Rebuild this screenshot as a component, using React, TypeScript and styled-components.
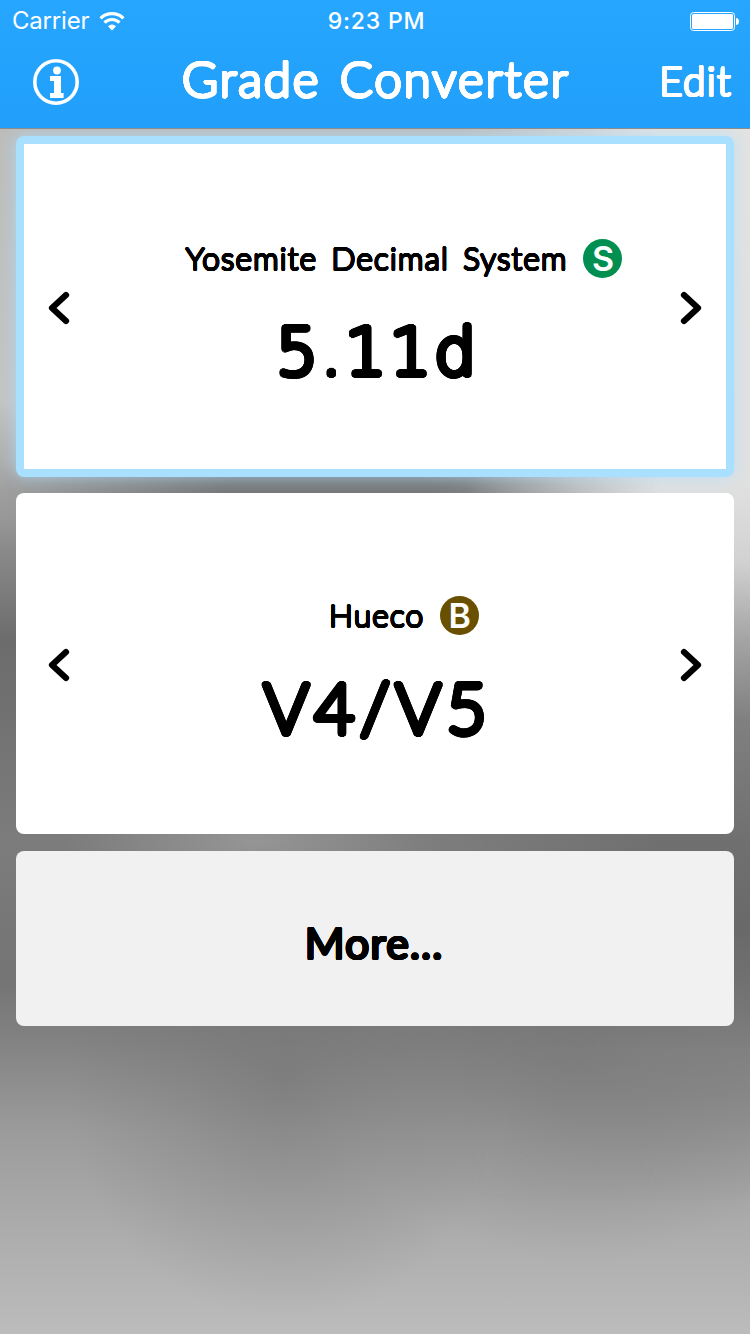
import React from "react";
import styled, { createGlobalStyle } from "styled-components";

const GlobalStyle = createGlobalStyle`
  * { box-sizing: border-box; }
  body { margin: 0; }
`;

/* Thickens a light face evenly in every direction, which rounds its stroke ends like chalk. */
const chalk = (radius: number) =>
  Array.from({ length: 20 }, (_, i) => {
    const a = (i / 20) * Math.PI * 2;
    return `${(Math.cos(a) * radius).toFixed(2)}px ${(Math.sin(a) * radius).toFixed(2)}px 0 currentColor`;
  }).join(", ");

const Screen = styled.div`
  position: relative;
  isolation: isolate;
  width: 750px;
  height: 1334px;
  overflow: hidden;
  color: #000;
  font-family: "Chalkboard SE", Lato, sans-serif;
  background:
    radial-gradient(ellipse 220px 240px at 285px 1080px, rgba(112, 112, 112, 0.5), rgba(112, 112, 112, 0.22) 50%, transparent),
    radial-gradient(ellipse 260px 210px at 580px 1050px, rgba(112, 112, 112, 0.5), rgba(112, 112, 112, 0.22) 50%, transparent),
    radial-gradient(ellipse 190px 80px at 255px 842px, rgba(160, 160, 160, 0.7), transparent),
    radial-gradient(ellipse 350px 70px at 330px 490px, rgba(118, 118, 118, 0.95) 30%, transparent),
    linear-gradient(to bottom, #bdbdbb 128px, #c4c4c4 400px, #a6a6a6 485px, #8a8a8a 550px,
      #6c6c6c 640px, #707070 700px, #7c7c7c 840px, #747474 980px, #828282 1040px, #9b9b9b 1130px,
      #acacac 1230px, #bcbcbc 1334px);

  &::before {
    content: "";
    position: absolute;
    inset: 0;
    z-index: -1;
    background:
      linear-gradient(to bottom, #e3e3e1 128px, #e1e1e1 480px, #d2d2d2 560px, #a4a4a4 640px,
        #808080 720px, #707070 840px, #696969 930px, rgba(128, 128, 128, 0.6) 1050px, transparent 1200px);
    mask-image: linear-gradient(to right, transparent 62%, #000 88%);
  }
`;

const Header = styled.header`
  position: relative;
  z-index: 1;
  height: 128px;
  color: #fff;
  background: linear-gradient(#26a6ff, #219ffa);
  box-shadow: 0 1px 0 #8c8c8c;
`;

const StatusBar = styled.div`
  height: 40px;
  padding: 1px 11px 0 12px;
  display: grid;
  grid-template-columns: 1fr auto 1fr;
  align-items: center;
  font: 400 24px/40px Inter, sans-serif;
`;

const Carrier = styled.div`
  display: flex;
  align-items: center;
  gap: 10px;
  letter-spacing: -0.2px;
`;

const Clock = styled.div`
  padding-left: 2px;
  font-weight: 500;
  font-size: 23px;
  letter-spacing: 0.8px;
`;

const BatterySlot = styled.div`
  display: flex;
  justify-content: flex-end;
`;

const NavBar = styled.nav`
  height: 88px;
  padding: 0 18px 4px 33px;
  display: grid;
  grid-template-columns: 149px 1fr 73px;
  align-items: center;
`;

const IconButton = styled.button`
  display: block;
  justify-self: start;
  padding: 0;
  border: 0;
  background: none;
`;

const Title = styled.h1`
  margin: 0;
  padding-bottom: 8px;
  font-size: 49px;
  line-height: 60px;
  font-weight: 300;
  letter-spacing: 1.9px;
  word-spacing: 4.5px;
  white-space: nowrap;
  text-shadow: ${chalk(1.5)};
`;

const EditButton = styled.button`
  padding: 0 0 3px;
  border: 0;
  background: none;
  color: inherit;
  font: 300 41px/50px "Chalkboard SE", Lato, sans-serif;
  letter-spacing: 1.1px;
  text-shadow: ${chalk(1)};
`;

const List = styled.main`
  padding: 8px 16px;
  display: flex;
  flex-direction: column;
`;

const Card = styled.section<{ $selected?: boolean }>`
  height: 341px;
  margin-bottom: 16px;
  border-radius: 8px;
  background: #fff;
  border: ${(p) => (p.$selected ? "8px solid #a9dfff" : "0")};
  box-shadow: ${(p) => (p.$selected ? "0 0 16px rgba(169, 223, 255, 0.75)" : "none")};
  padding: ${(p) => (p.$selected ? "3px 24px 0" : "3px 32px 0")};
  display: grid;
  grid-template-columns: 22px 1fr 22px;
  align-items: center;
`;

const CardBody = styled.div`
  height: 150px;
  padding-top: 4px;
  display: flex;
  flex-direction: column;
  align-items: center;
`;

const SystemRow = styled.div`
  height: 42px;
  flex: none;
  display: flex;
  align-items: center;
  gap: 16px;
  padding-left: 58px;
`;

const SystemName = styled.span`
  font-size: 32px;
  line-height: 40px;
  font-weight: 300;
  letter-spacing: 0.9px;
  word-spacing: 4.6px;
  white-space: nowrap;
  text-shadow: ${chalk(0.85)};
`;

const Badge = styled.span<{ $color: string }>`
  width: 39px;
  height: 39px;
  border-radius: 50%;
  background: ${(p) => p.$color};
  color: #fff;
  display: flex;
  align-items: center;
  justify-content: center;
  font: 600 34px/39px Inter, sans-serif;
`;

const Grade = styled.div<{ $serifOne?: boolean }>`
  margin-top: ${(p) => (p.$serifOne ? 34 : 31)}px;
  padding-left: ${(p) => (p.$serifOne ? 5 : 5)}px;
  font-family: "Chalkboard SE", ${(p) => (p.$serifOne ? '"DejaVu Sans"' : "Lato")}, sans-serif;
  font-weight: ${(p) => (p.$serifOne ? 200 : 300)};
  font-size: ${(p) => (p.$serifOne ? 66 : 70)}px;
  line-height: 80px;
  letter-spacing: ${(p) => (p.$serifOne ? 2.8 : 5)}px;
  white-space: nowrap;
  text-shadow: ${(p) => chalk(p.$serifOne ? 3 : 2.8)};
`;

const MoreButton = styled.button`
  height: 175px;
  margin-top: 1px;
  padding: 8px 2px 0 0;
  border: 0;
  border-radius: 8px;
  background: #f1f1f1;
  color: inherit;
  font: 400 43px/52px "Chalkboard SE", Lato, sans-serif;
  letter-spacing: 1px;
  text-shadow: ${chalk(1.05)};
`;

const InfoIcon = () => (
  <svg width="46" height="46" viewBox="0 0 46 46" display="block">
    <circle cx="23" cy="23" r="21.2" fill="none" stroke="#fff" strokeWidth="3.6" />
    <circle cx="24" cy="11.5" r="3.9" fill="#fff" />
    <path d="M17 17h11v17h2.6v5H17v-5h4V22h-4z" fill="#fff" />
  </svg>
);

const WifiIcon = () => (
  <svg width="26" height="19" viewBox="0 0 26 19" fill="none" stroke="#fff" strokeWidth="3.2">
    <path d="M1.6 6.3a16.3 16.3 0 0 1 22.8 0" />
    <path d="M5.5 10.6a10.6 10.6 0 0 1 15 0" />
    <path d="M13 18.4l-4-4.2a5.8 5.8 0 0 1 8 0z" fill="#fff" stroke="none" />
  </svg>
);

const BatteryIcon = () => (
  <svg width="49" height="19" viewBox="0 0 49 19">
    <rect x="0.5" y="0.5" width="44" height="18" rx="3" fill="none" stroke="#fff" />
    <rect x="2" y="2" width="41" height="15" rx="1.5" fill="#fff" />
    <path d="M46 6c4 0 4 7 0 7z" fill="#fff" />
  </svg>
);

const Chevron = ({ next }: { next?: boolean }) => (
  <svg width="22" height="34" viewBox="0 0 22 34" display="block" fill="none" stroke="#000" strokeWidth="6.2" strokeLinecap="round" strokeLinejoin="round">
    <path d={next ? "M4 4L18 17L4 30" : "M18 4L4 17L18 30"} />
  </svg>
);

type System = {
  name: string;
  badge: string;
  color: string;
  grade: string;
  serifOne?: boolean;
  selected?: boolean;
};

const systems: System[] = [
  { name: "Yosemite Decimal System", badge: "S", color: "#008f50", grade: "5.11d", serifOne: true, selected: true },
  { name: "Hueco", badge: "B", color: "#695000", grade: "V4/V5" },
];

export default function App() {
  return (
    <Screen>
      <GlobalStyle />
      <Header>
        <StatusBar>
          <Carrier>Carrier<WifiIcon /></Carrier>
          <Clock>9:23 PM</Clock>
          <BatterySlot><BatteryIcon /></BatterySlot>
        </StatusBar>
        <NavBar>
          <IconButton aria-label="Info"><InfoIcon /></IconButton>
          <Title>Grade Converter</Title>
          <EditButton>Edit</EditButton>
        </NavBar>
      </Header>
      <List>
        {systems.map((s) => (
          <Card key={s.name} $selected={s.selected}>
            <IconButton aria-label="Previous grade"><Chevron /></IconButton>
            <CardBody>
              <SystemRow>
                <SystemName>{s.name}</SystemName>
                <Badge $color={s.color}>{s.badge}</Badge>
              </SystemRow>
              <Grade $serifOne={s.serifOne}>{s.grade}</Grade>
            </CardBody>
            <IconButton aria-label="Next grade"><Chevron next /></IconButton>
          </Card>
        ))}
        <MoreButton>More...</MoreButton>
      </List>
    </Screen>
  );
}
